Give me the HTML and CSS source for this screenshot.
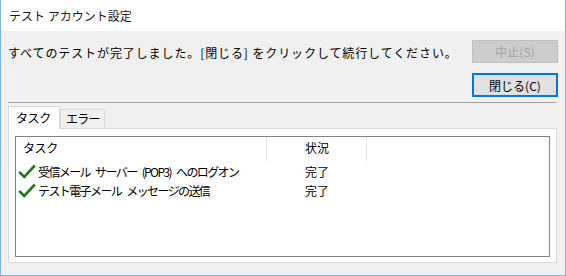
FILE: index.html
```html
<!DOCTYPE html>
<html lang="ja">
<head>
  <meta charset="UTF-8">
  <title>テスト アカウント設定</title>
  <link rel="stylesheet" href="styles.css">
</head>
<body>
  <div class="window">
    <div class="titlebar">テスト アカウント設定</div>

    <div class="content">
      <div class="top">
        <p class="message">すべてのテストが完了しました。[閉じる] をクリックして続行してください。</p>
        <div class="actions">
          <button class="btn" disabled>中止(S)</button>
          <button class="btn default">閉じる(C)</button>
        </div>
      </div>

      <div class="separator"></div>

      <div class="tabs">
        <div class="tab active">タスク</div>
        <div class="tab">エラー</div>
      </div>

      <div class="panel">
        <div class="list">
          <div class="list-head">
            <div class="col-task">タスク</div>
            <div class="col-status">状況</div>
          </div>
          <div class="list-row">
            <div class="col-task">
              <svg class="check" width="18" height="15" viewBox="0 0 18 15"><path d="M1.2 8 L6.3 13 L16.8 1.5" fill="none" stroke="#1c7a1c" stroke-width="2.6"/></svg>
              <span class="name">受信メール サーバー (POP3) へのログオン</span>
            </div>
            <div class="col-status">完了</div>
          </div>
          <div class="list-row">
            <div class="col-task">
              <svg class="check" width="18" height="15" viewBox="0 0 18 15"><path d="M1.2 8 L6.3 13 L16.8 1.5" fill="none" stroke="#1c7a1c" stroke-width="2.6"/></svg>
              <span class="name">テスト電子メール メッセージの送信</span>
            </div>
            <div class="col-status">完了</div>
          </div>
        </div>
      </div>
    </div>
  </div>
</body>
</html>
```

FILE: styles.css
```css
* {
  margin: 0;
  padding: 0;
  box-sizing: border-box;
}

body {
  font-family: "Noto Sans CJK JP", "Noto Sans", sans-serif;
  font-size: 12px;
  color: #000;
  background-color: #fff;
}

.window {
  width: 566px;
  height: 276px;
  display: flex;
  flex-direction: column;
  border: 1px solid #7fb3e0;
  border-top: none;
  background-color: #f0f0f0;
}

.titlebar {
  height: 31px;
  line-height: 32px;
  padding-left: 8px;
  background-color: #fff;
  color: #1a1a1a;
}

.content {
  flex: 1;
  padding: 9px 7px 0 7px;
}

.top {
  display: flex;
  justify-content: space-between;
}

.message {
  margin-top: 3px;
  line-height: 20px;
  letter-spacing: 0.9px;
}

.actions {
  display: flex;
  flex-direction: column;
  gap: 10px;
}

.btn {
  width: 86px;
  height: 23px;
  font-family: inherit;
  font-size: 12px;
  color: #000;
  background-color: #e1e1e1;
  border: 1px solid #adadad;
}

.btn:disabled {
  color: #a3a3a3;
  background-color: #cccccc;
  border-color: #bfbfbf;
}

.btn.default {
  height: 24px;
  border: 2px solid #0078d7;
}

.separator {
  height: 1px;
  margin: 5px 2px 0 0;
  background-color: #a0a0a0;
}

.tabs {
  display: flex;
  align-items: flex-end;
  height: 22px;
  margin-top: 3px;
}

.tab {
  width: 45px;
  height: 19px;
  line-height: 18px;
  padding-left: 5px;
  letter-spacing: -0.8px;
  border: 1px solid #d9d9d9;
  border-bottom: none;
  background-color: #f0f0f0;
}

.tab.active {
  width: 52px;
  height: 23px;
  padding-left: 7px;
  line-height: 21px;
  letter-spacing: -0.4px;
  background-color: #fff;
  margin-bottom: -1px;
  position: relative;
}

.panel {
  height: 135px;
  margin-right: 1px;
  padding: 7px 6px 5px 6px;
  background-color: #fff;
  border: 1px solid #d9d9d9;
}

.list {
  height: 100%;
  border: 1px solid #828282;
  background-color: #fff;
}

.list-head,
.list-row {
  display: flex;
}

.list-head {
  height: 24px;
  line-height: 22px;
  margin-bottom: 1px;
}

.list-head .col-task,
.list-head .col-status {
  border-right: 1px solid #e5e5e5;
}

.col-task {
  width: 251px;
  padding-left: 7px;
  letter-spacing: -0.4px;
}

.col-status {
  width: 100px;
  padding-left: 38px;
}

.list-row {
  height: 19px;
  line-height: 19px;
}

.list-row .col-task {
  display: flex;
  align-items: center;
  gap: 2px;
  padding-left: 2px;
  white-space: nowrap;
}

.name {
  letter-spacing: -1.6px;
  word-spacing: 4px;
}

.check {
  flex: none;
}
```
